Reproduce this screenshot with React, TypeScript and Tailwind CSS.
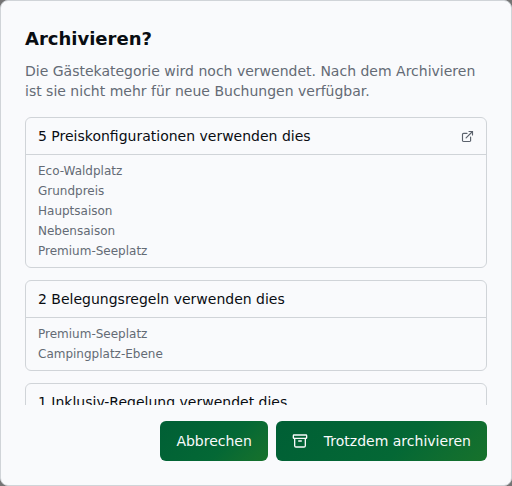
import { Archive } from "lucide-react";

interface UsageGroup {
  title: string;
  href?: string;
  items: string[];
}

const USAGES: UsageGroup[] = [
  {
    title: "5 Preiskonfigurationen verwenden dies",
    href: "#preiskonfigurationen",
    items: ["Eco-Waldplatz", "Grundpreis", "Hauptsaison", "Nebensaison", "Premium-Seeplatz"],
  },
  {
    title: "2 Belegungsregeln verwenden dies",
    items: ["Premium-Seeplatz", "Campingplatz-Ebene"],
  },
  {
    title: "1 Inklusiv-Regelung verwendet dies",
    items: [],
  },
];

const BUTTON_CLASS =
  "inline-flex h-10 items-center justify-center gap-4 rounded-md bg-linear-135 from-[#005f35] via-[#046835] via-60% to-[#17722b] px-4 text-sm text-gray-50";

function ExternalLinkIcon() {
  return (
    <svg
      viewBox="0 0 14 14"
      className="size-3.5"
      fill="none"
      stroke="currentColor"
      strokeWidth="1.15"
      strokeLinecap="round"
      strokeLinejoin="round"
      aria-hidden="true"
    >
      <path d="M9 2.5h3.5V6" />
      <path d="M6.1 8.9l6.4-6.4" />
      <path d="M10.6 8v3.4a1.1 1.1 0 0 1-1.1 1.1H3.6a1.1 1.1 0 0 1-1.1-1.1V5.5a1.1 1.1 0 0 1 1.1-1.1H7" />
    </svg>
  );
}

function UsageCard({ title, href, items }: UsageGroup) {
  return (
    <section className="rounded-md border border-[#d0d4d8]">
      <div className="flex items-center justify-between border-b border-[#d0d4d8] px-3 py-2">
        <h3 className="text-sm text-[#090d12]">{title}</h3>
        {href && (
          <a href={href} aria-label="Öffnen" className="text-[#5b626c]">
            <ExternalLinkIcon />
          </a>
        )}
      </div>
      <ul className="space-y-1 px-3 py-2 text-xs text-[#646b75]">
        {items.map((item) => (
          <li key={item}>{item}</li>
        ))}
      </ul>
    </section>
  );
}

export default function App() {
  return (
    <div className="bg-[#747474] font-['DejaVu_Sans',sans-serif]">
      <div
        role="alertdialog"
        aria-labelledby="archive-title"
        aria-describedby="archive-description"
        className="flex flex-col gap-4 rounded-lg border border-[#d0d4d8] bg-[#f9fafc] p-6"
      >
        <header className="space-y-2">
          <h2 id="archive-title" className="text-lg font-bold text-[#090d12]">
            Archivieren?
          </h2>
          <p id="archive-description" className="text-sm text-[#646b75]">
            Die Gästekategorie wird noch verwendet. Nach dem Archivieren ist sie nicht mehr für neue
            Buchungen verfügbar.
          </p>
        </header>

        <div className="max-h-72 space-y-3 overflow-y-auto [scrollbar-width:none]">
          {USAGES.map((usage) => (
            <UsageCard key={usage.title} {...usage} />
          ))}
        </div>

        <footer className="flex justify-end gap-2">
          <button type="button" className={BUTTON_CLASS}>
            Abbrechen
          </button>
          <button type="button" className={BUTTON_CLASS}>
            <Archive className="size-4" />
            Trotzdem archivieren
          </button>
        </footer>
      </div>
    </div>
  );
}
